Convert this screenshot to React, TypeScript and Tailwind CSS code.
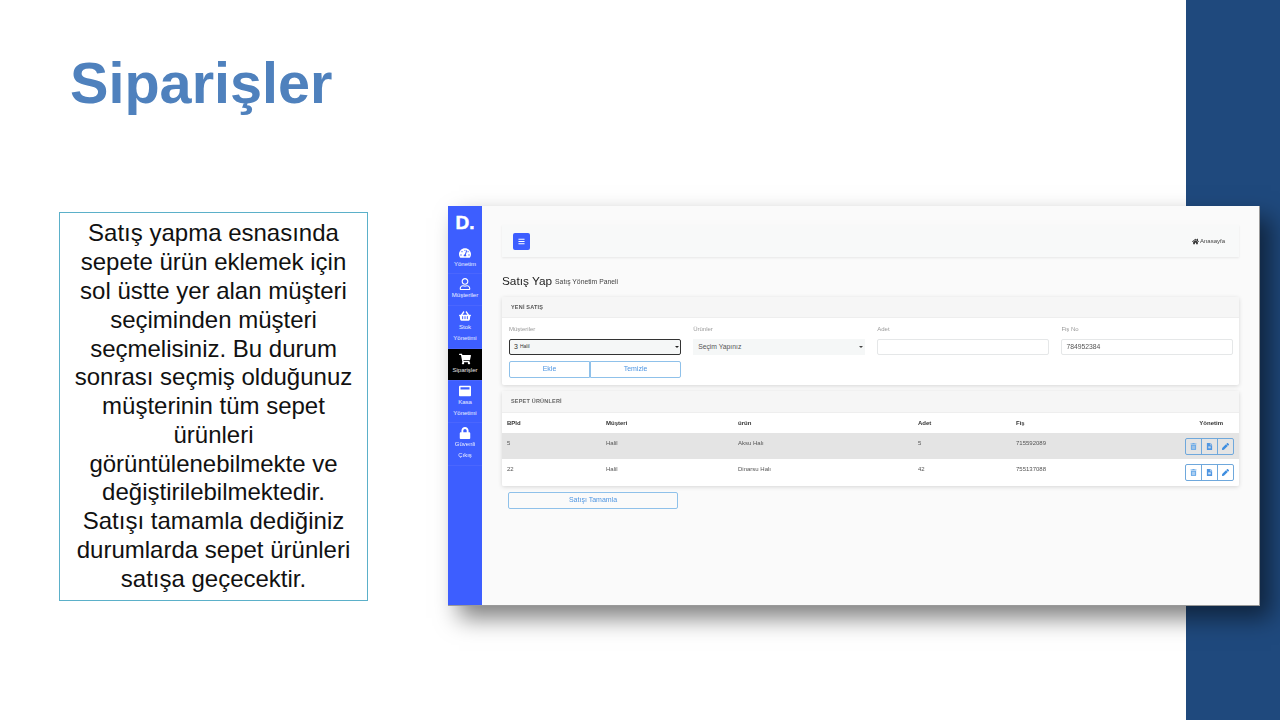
import { FaTachometerAlt, FaRegUser, FaShoppingBasket, FaShoppingCart, FaWindowMaximize, FaLock, FaBars, FaHome, FaTrashAlt, FaFileAlt, FaPen } from "react-icons/fa";
import type { ReactNode } from "react";

const paragraph = [
  "Satış yapma esnasında",
  "sepete ürün eklemek için",
  "sol üstte yer alan müşteri",
  "seçiminden müşteri",
  "seçmelisiniz. Bu durum",
  "sonrası seçmiş olduğunuz",
  "müşterinin tüm sepet",
  "ürünleri",
  "görüntülenebilmekte ve",
  "değiştirilebilmektedir.",
  "Satışı tamamla dediğiniz",
  "durumlarda sepet ürünleri",
  "satışa geçecektir.",
];

function NavItem({ icon, lines, active, h }: { icon: ReactNode; lines: string[]; active?: boolean; h: string }) {
  return (
    <div className={`${h} flex flex-col items-center justify-center border-b border-[#4a66fe] ${active ? "bg-black" : ""}`}>
      <div className="text-[12px] leading-[13px] text-white">{icon}</div>
      {lines.map((l) => (
        <div key={l} className="text-[6px] leading-[11px] text-white/90">{l}</div>
      ))}
    </div>
  );
}

function Sidebar() {
  return (
    <div className="w-[34px] shrink-0 bg-[#3d5eff] flex flex-col">
      <div className="h-[37px] flex items-center justify-center pb-[4px] text-[19px] font-bold leading-none text-white [-webkit-text-stroke:0.5px_white]">D.</div>
      <NavItem h="h-[31px]" icon={<FaTachometerAlt />} lines={["Yönetim"]} />
      <NavItem h="h-[32px]" icon={<FaRegUser />} lines={["Müşteriler"]} />
      <NavItem h="h-[43px]" icon={<FaShoppingBasket />} lines={["Stok", "Yönetimi"]} />
      <NavItem h="h-[32px]" active icon={<FaShoppingCart />} lines={["Siparişler"]} />
      <NavItem h="h-[42px]" icon={<FaWindowMaximize />} lines={["Kasa", "Yönetimi"]} />
      <NavItem h="h-[43px]" icon={<FaLock />} lines={["Güvenli", "Çıkış"]} />
    </div>
  );
}

function Label({ children }: { children: ReactNode }) {
  return <div className="h-[21px] pt-[8px] text-[6px] leading-[7px] text-[#9a9a9a]">{children}</div>;
}

function Caret({ className }: { className: string }) {
  return <span className={`${className} w-0 h-0 border-x-[2px] border-x-transparent border-t-[2.5px]`} />;
}

function Actions() {
  const cls = "w-[17px] h-[17px] flex items-center justify-center border border-[#6fa8dc] text-[#3f8ee0] text-[7px]";
  return (
    <div className="flex rounded-[2px]">
      <span className={`${cls} rounded-l-[2px]`}><FaTrashAlt className="text-[#6aaae8]" /></span>
      <span className={`${cls} -ml-px`}><FaFileAlt className="text-[#4f96e2]" /></span>
      <span className={`${cls} -ml-px rounded-r-[2px]`}><FaPen /></span>
    </div>
  );
}

function Row({ cells, striped }: { cells: string[]; striped?: boolean }) {
  return (
    <div className={`grid grid-cols-[99px_132px_180px_98px_1fr_auto] items-center pl-[5px] pr-[5px] text-[6px] text-[#555] ${striped ? "bg-[#e4e4e4] h-[26px]" : "bg-white h-[27px]"}`}>
      {cells.map((c) => (
        <div key={c} className="mb-[6px]">{c}</div>
      ))}
      <Actions />
    </div>
  );
}

function AppShot() {
  return (
    <div className="relative z-10 ml-[80px] mt-[-6px] w-[812px] h-[400px] shrink-0 flex bg-[#fafafa] border-r border-b border-[#999] shadow-[11px_12px_22px_rgba(0,0,0,0.5)] font-['Liberation_Sans',sans-serif] blur-[0.4px]">
      <Sidebar />
      <div className="flex-1 pl-[20px] pr-[20px] pt-[19px] min-w-0">
        <div className="h-[32px] bg-[#f8f9f9] shadow-[0_1px_2px_rgba(0,0,0,0.08)] flex items-center justify-between pl-[11px] pr-[14px]">
          <div className="w-[17px] h-[17px] rounded-[2px] bg-[#3d5eff] flex items-center justify-center text-white text-[7px]"><FaBars /></div>
          <div className="flex items-center gap-[1px] text-[6px] text-[#444]"><FaHome className="text-[7px] text-[#333]" />Anasayfa</div>
        </div>
        <div className="h-[40px] flex items-center pt-[9px] gap-[3px]">
          <span className="text-[11.8px] text-[#222]">Satış Yap</span>
          <span className="text-[6.8px] text-[#444] pt-[2px]">Satış Yönetim Paneli</span>
        </div>
        <div className="bg-white rounded-[2px] shadow-[0_1px_4px_rgba(0,0,0,0.15)] h-[88px]">
          <div className="h-[21px] bg-[#f6f6f6] border-b border-[#eee] flex items-center pl-[9px] text-[5.5px] font-bold text-[#555] tracking-[0.2px]">YENİ SATIŞ</div>
          <div className="grid grid-cols-4 gap-x-[12.5px] pl-[7px] pr-[6px]">
            <div>
              <Label>Müşteriler</Label>
              <div className="relative h-[16px] bg-[#f5f7f7] border border-[#333] rounded-[2px] flex items-center pl-[4px] text-[7px] text-[#333]">
                <span>3</span><span className="ml-[2px] text-[5px]">Halil</span>
                <Caret className="absolute right-[1px] top-[6px] border-t-[#222]" />
              </div>
            </div>
            <div>
              <Label>Ürünler</Label>
              <div className="relative h-[16px] bg-[#f5f7f7] flex items-center pl-[5px] text-[6.8px] text-[#555]">
                Seçim Yapınız
                <Caret className="absolute right-[2px] top-[7px] border-t-[#444]" />
              </div>
            </div>
            <div>
              <Label>Adet</Label>
              <div className="h-[16px] bg-white border border-[#e5e7e8] rounded-[2px]" />
            </div>
            <div>
              <Label>Fiş No</Label>
              <div className="h-[16px] bg-white border border-[#e5e7e8] rounded-[2px] flex items-center pl-[4px] text-[6.8px] text-[#555]">784952384</div>
            </div>
          </div>
          <div className="flex pl-[7px] mt-[6px]">
            <div className="w-[81px] h-[17px] border border-[#8fc1ea] rounded-l-[2px] flex items-center justify-center text-[7px] text-[#4f96e2]">Ekle</div>
            <div className="w-[91px] h-[17px] border border-[#8fc1ea] rounded-r-[2px] flex items-center justify-center text-[7px] text-[#4f96e2]">Temizle</div>
          </div>
        </div>
        <div className="mt-[6px] bg-white rounded-[2px] shadow-[0_1px_4px_rgba(0,0,0,0.15)] overflow-hidden">
          <div className="h-[22px] bg-[#f6f6f6] border-b border-[#eee] flex items-center pl-[9px] text-[5.5px] font-bold text-[#666] tracking-[0.2px]">SEPET ÜRÜNLERİ</div>
          <div className="h-[20px] grid grid-cols-[99px_132px_180px_98px_1fr_auto] items-center pl-[5px] pr-[16px] text-[6px] font-bold text-[#333]">
            <div>BPId</div><div>Müşteri</div><div>ürün</div><div>Adet</div><div>Fiş</div><div>Yönetim</div>
          </div>
          <Row striped cells={["5", "Halil", "Aksu Halı", "5", "715592089"]} />
          <Row cells={["22", "Halil", "Dinarsu Halı", "42", "755137088"]} />
        </div>
        <div className="mt-[6px] ml-[6px] w-[170px] h-[17px] border border-[#8fc1ea] rounded-[2px] flex items-center justify-center text-[7px] text-[#4f96e2]">Satışı Tamamla</div>
      </div>
    </div>
  );
}

export default function App() {
  return (
    <div className="relative w-[1280px] h-[720px] overflow-hidden bg-white flex font-['Liberation_Sans',sans-serif]">
      <div className="w-[1186px] shrink-0 flex flex-col">
        <h1 className="pl-[70px] pt-[48px] h-[212px] text-[57.6px] leading-[70px] font-bold text-[#4f81bd]">Siparişler</h1>
        <div className="flex items-start">
          <div className="ml-[59px] w-[309px] h-[389px] shrink-0 border-[1.5px] border-[#5bb0c9] flex flex-col items-center justify-center text-[24px] leading-[28.8px] text-[#111]">
            {paragraph.map((l) => (
              <div key={l} className="whitespace-nowrap">{l}</div>
            ))}
          </div>
          <AppShot />
        </div>
      </div>
      <div className="flex-1 bg-[#1f497d]" />
    </div>
  );
}
